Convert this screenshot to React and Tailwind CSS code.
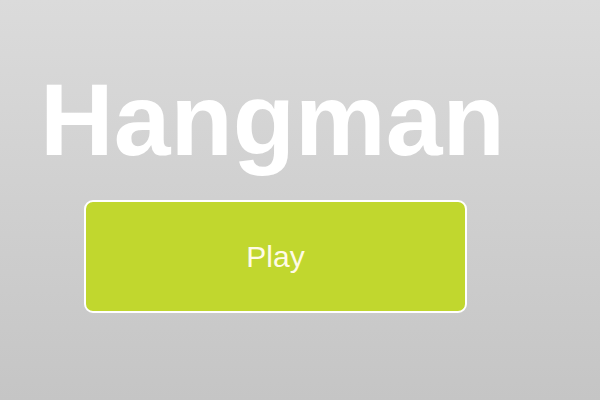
import React from "react"

export default function App() {
  return (
    <div className="w-[600px] h-[400px] overflow-hidden bg-gradient-to-b from-[#dbdbdb] to-[#c5c5c5] font-['Liberation_Sans',Arial,sans-serif]">
      <div className="flex flex-col items-start pt-[69px]">
        <h1 className="ml-[40px] text-[102px] leading-none font-bold text-white">Hangman</h1>
        <button className="ml-[84px] mt-[29px] w-[383px] h-[113px] rounded-[9px] border-2 border-white bg-[#c1d72e] flex items-center justify-center">
          <span className="text-[30px] text-[#fffbe6] leading-none">Play</span>
        </button>
      </div>
    </div>
  )
}
